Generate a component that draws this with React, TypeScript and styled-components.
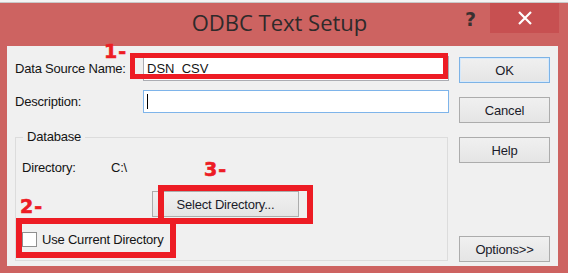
import styled, { createGlobalStyle } from "styled-components";

const GlobalStyle = createGlobalStyle`
  html, body {
    margin: 0;
    padding: 0;
    background: #cd6361;
  }
  * {
    box-sizing: border-box;
  }
`;

const Page = styled.div`
  position: relative;
  width: 568px;
  height: 273px;
  overflow: hidden;
  background: #cd6361;
  font-family: "Liberation Sans", Arial, sans-serif;
`;

const TopStrip = styled.div`
  height: 3px;
  background: #f4f4f4;
  border-bottom: 1px solid #c9c9c9;
`;

const TitleBar = styled.div`
  height: 43px;
  display: grid;
  grid-template-columns: 1fr auto 1fr;
  align-items: start;
  padding-right: 9px;
`;

const Title = styled.div`
  grid-column: 2;
  padding-top: 6px;
  font-family: "Open Sans", "Noto Sans", sans-serif;
  font-size: 22px;
  line-height: 27px;
  color: #2e2a2a;
  white-space: nowrap;
`;

const Controls = styled.div`
  grid-column: 3;
  display: flex;
  justify-content: flex-end;
  align-items: flex-start;
`;

const HelpMark = styled.span`
  margin-top: 5px;
  margin-right: 14px;
  font-family: "DejaVu Sans", sans-serif;
  font-weight: bold;
  font-size: 19px;
  line-height: 22px;
  color: #3a3030;
`;

const CloseButton = styled.div`
  width: 69px;
  height: 30px;
  background: #c75051;
  display: flex;
  align-items: center;
  justify-content: center;
`;

const Client = styled.div`
  display: flex;
  height: 220px;
  margin: 0 10px 0 7px;
  background: #f0f0f0;
  color: #141414;
  font-size: 13px;
  letter-spacing: -0.2px;
`;

const LeftColumn = styled.div`
  width: 442px;
  padding: 10px 0 0 8px;
  display: flex;
  flex-direction: column;
`;

const FieldRow = styled.div<{ $top: number; $h: number }>`
  display: flex;
  align-items: center;
  margin-top: ${(p) => p.$top}px;
  height: ${(p) => p.$h}px;
`;

const FieldLabel = styled.span`
  width: 128px;
  white-space: nowrap;
`;

const TextBox = styled.div<{ $focused?: boolean }>`
  width: 306px;
  height: 100%;
  display: flex;
  align-items: center;
  padding-left: 3px;
  background: #ffffff;
  border: 1px solid ${(p) => (p.$focused ? "#7eb4ea" : "#abadb3")};
  letter-spacing: 0;
`;

const Caret = styled.span`
  width: 1px;
  height: 15px;
  background: #000;
`;

const GroupBox = styled.div`
  position: relative;
  margin-top: 24px;
  width: 433px;
  height: 124px;
  border: 1px solid #dcdcdc;
  padding: 22px 0 0 6px;
  display: flex;
  flex-direction: column;
`;

const Legend = styled.span`
  position: absolute;
  top: -9px;
  left: 7px;
  padding: 0 4px;
  background: #f0f0f0;
  line-height: 16px;
`;

const DirRow = styled.div`
  display: flex;
  line-height: 15px;
`;

const DirLabel = styled.span`
  width: 89px;
`;

const PushButton = styled.div<{ $default?: boolean; $w: number }>`
  width: ${(p) => p.$w}px;
  height: 26px;
  display: flex;
  align-items: center;
  justify-content: center;
  background: linear-gradient(#f0f0f0, #e5e5e5);
  border: 1px solid ${(p) => (p.$default ? "#7db3e6" : "#acacac")};
  box-shadow: ${(p) => (p.$default ? "inset 0 0 0 1px #d6e9fb" : "none")};
  color: #1b1b2a;
  white-space: nowrap;
`;

const SelectRow = styled.div`
  margin-top: 16px;
  padding-left: 130px;
`;

const CheckRow = styled.div`
  margin-top: 15px;
  display: flex;
  align-items: center;
  gap: 5px;
  height: 15px;
`;

const CheckBox = styled.span`
  width: 15px;
  height: 15px;
  background: #fff;
  border: 1px solid #8f8f8f;
`;

const RightColumn = styled.div`
  margin-left: 10px;
  width: 91px;
  padding: 11px 0 4px;
  display: flex;
  flex-direction: column;
  gap: 14px;
`;

const BottomButton = styled(PushButton)`
  margin-top: auto;
`;

const Mark = styled.div<{ $x: number; $y: number; $w: number; $h: number; $t: number }>`
  position: absolute;
  left: ${(p) => p.$x}px;
  top: ${(p) => p.$y}px;
  width: ${(p) => p.$w}px;
  height: ${(p) => p.$h}px;
  border: ${(p) => p.$t}px solid #ed1c24;
`;

const MarkNumber = styled.span<{ $x: number; $y: number }>`
  position: absolute;
  left: ${(p) => p.$x}px;
  top: ${(p) => p.$y}px;
  font-family: "DejaVu Sans", sans-serif;
  font-weight: 900;
  font-size: 19px;
  line-height: 18px;
  letter-spacing: 1px;
  color: #ed1c24;
  -webkit-text-stroke: 0.6px #ed1c24;
`;

export default function App() {
  return (
    <>
      <GlobalStyle />
      <Page>
        <TopStrip />
        <TitleBar>
          <Title>ODBC Text Setup</Title>
          <Controls>
            <HelpMark>?</HelpMark>
            <CloseButton>
              <svg width="14" height="14" viewBox="0 0 14 14">
                <path d="M1 1 L13 13 M13 1 L1 13" stroke="#ffffff" strokeWidth="2.2" />
              </svg>
            </CloseButton>
          </Controls>
        </TitleBar>
        <Client>
          <LeftColumn>
            <FieldRow $top={0} $h={25}>
              <FieldLabel>Data Source Name:</FieldLabel>
              <TextBox>DSN_CSV</TextBox>
            </FieldRow>
            <FieldRow $top={9} $h={23}>
              <FieldLabel>Description:</FieldLabel>
              <TextBox $focused>
                <Caret />
              </TextBox>
            </FieldRow>
            <GroupBox>
              <Legend>Database</Legend>
              <DirRow>
                <DirLabel>Directory:</DirLabel>
                <span>C:\</span>
              </DirRow>
              <SelectRow>
                <PushButton $w={147}>Select Directory...</PushButton>
              </SelectRow>
              <CheckRow>
                <CheckBox />
                <span>Use Current Directory</span>
              </CheckRow>
            </GroupBox>
          </LeftColumn>
          <RightColumn>
            <PushButton $w={91} $default>OK</PushButton>
            <PushButton $w={91}>Cancel</PushButton>
            <PushButton $w={91}>Help</PushButton>
            <BottomButton $w={91}>Options&gt;&gt;</BottomButton>
          </RightColumn>
        </Client>

        <Mark $x={130} $y={53} $w={318} $h={26} $t={5} />
        <Mark $x={16} $y={218} $w={160} $h={40} $t={6} />
        <Mark $x={158} $y={185} $w={155} $h={39} $t={6} />
        <MarkNumber $x={104} $y={42}>1-</MarkNumber>
        <MarkNumber $x={20} $y={197}>2-</MarkNumber>
        <MarkNumber $x={204} $y={160}>3-</MarkNumber>
      </Page>
    </>
  );
}
